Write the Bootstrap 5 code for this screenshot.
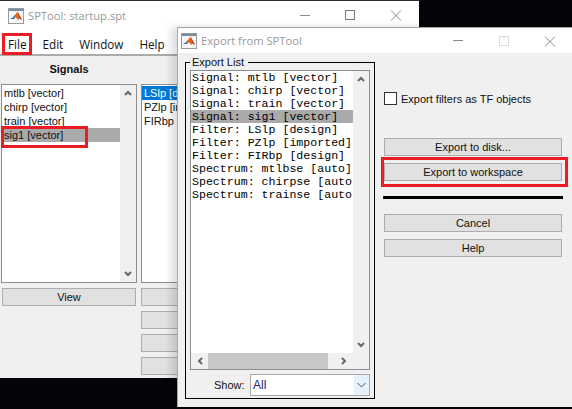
<!DOCTYPE html>
<html lang="en">
<head>
<meta charset="utf-8">
<title>SPTool export</title>
<link href="https://cdn.jsdelivr.net/npm/bootstrap@5.3.0/dist/css/bootstrap.min.css" rel="stylesheet">
<style>
html,body{margin:0;background:#040409;overflow:hidden}
.desk{position:relative;width:572px;height:409px;background:#040409;overflow:hidden;font-family:"Liberation Sans",sans-serif;font-size:11px;line-height:14px;color:#111}
.win{position:absolute;background:#f0f0f0;display:flex;flex-direction:column}
.win-main{left:0;top:0;width:419px;height:378px;border-top:1px solid #2b2b2b}
.win-dlg{left:177px;top:27px;width:395px;height:380px;border-top:1px solid #a0a0a0;border-left:1px solid #a8a8a8;box-shadow:-6px 0 8px rgba(0,0,0,.13)}
.tbar{height:29px;background:#fff;display:flex;align-items:center;flex:none;font-family:"Open Sans",sans-serif;font-size:11.2px;color:#999}
.tbar .ttl{margin-left:4px;white-space:nowrap}
.tbar svg.logo{margin-left:8px;flex:none}
.win-dlg .tbar{height:25px}
.win-dlg .tbar svg.logo{margin-left:3px}
.ctl{margin-left:auto;display:flex;flex:none}
.ctl svg{display:block}
.menus{height:26px;background:#fff;border-bottom:2px solid #ababab;display:flex;align-items:center;padding:3px 0 0 8px;gap:16px;font-family:"Open Sans",sans-serif;font-size:11.7px;color:#111;flex:none}
.main-body{display:flex;gap:4px;padding:6px 0 0 1px;flex:1;min-height:0}
.col-a{width:136px;flex:none;display:flex;flex-direction:column}
.col-b{width:136px;flex:none;display:flex;flex-direction:column}
.hd{font-weight:700;text-align:center;height:22px;line-height:14px;padding-top:0}
.hd-gap{height:22px}
.lbx{height:199px;background:#fff;border:1px solid #8b8f94;display:flex;flex:none;overflow:hidden}
.lbx-items{flex:1;min-width:0;padding-top:1px;list-style:none;margin:0}
.lbx-items .list-group-item{border:0;border-radius:0;padding:0 0 0 2px;background:transparent;font-size:11px;line-height:15px;height:14px;white-space:nowrap;color:#111;margin:0}
.lbx-items .list-group-item.picked{background:#aaa}
.lbx-items .list-group-item.blue{background:#0078d7;color:#fff}
.vbar{width:16px;flex:none;background:#f0f0f0;display:flex;flex-direction:column;justify-content:space-between;align-items:center;padding:5px 0}
.gbtn{display:block;width:100%;height:18px;padding:0;border:1px solid #adadad;border-radius:0;background:#e1e1e1;color:#111;font-size:11px;line-height:15px;font-family:"Liberation Sans",sans-serif}
.gbtn:hover{background:#e1e1e1;border-color:#adadad;color:#111}
.col-a .gbtn{margin:5px 0 0 1px;width:134px}
.col-b .gbtn{margin-top:5px}
.dlg-body{display:flex;flex:1;min-height:0}
.grp{position:relative;margin:9px 0 0 7px;width:190px;height:337px;border:1px solid #000;padding:7px 4px 0 4px;flex:none}
.grp-legend{position:absolute;left:4px;top:-8px;background:#f0f0f0;padding:0 4px 0 2px;font-size:11px;line-height:14px}
.exp{height:300px;background:#fff;border:1px solid #8b8f94;display:flex;flex-direction:column;width:180px}
.exp-top{flex:1;display:flex;min-height:0}
.exp-items{flex:1;min-width:0;overflow:hidden;list-style:none;margin:0;padding:0}
.exp-items .list-group-item{border:0;border-radius:0;padding:0 0 0 1px;margin:0;background:transparent;font-family:"Liberation Mono",monospace;font-size:11.6px;line-height:13px;height:13px;white-space:nowrap;color:#000;overflow:hidden}
.exp-items .list-group-item.picked{background:#aaa}
.hbar{height:16px;flex:none;background:#f0f0f0;display:flex;align-items:center}
.hend{width:17px;flex:none;display:flex;justify-content:center}
.hthumb{flex:1;height:100%;background:#c8c8c8}
.hend-r{width:41px;padding-right:9px}
.show-row{display:flex;align-items:center;margin-top:4px;height:22px}
.show-lbl{margin-left:24px;width:36px}
.combo{width:120px;height:22px;background:#fff;border:1px solid #a9a9a9;display:flex;align-items:center;padding-left:2px;color:#1a237e;font-size:12px}
.combo-txt{flex:1}
.combo-arr{width:15px;height:100%;background:#e5f1fb;display:flex;align-items:center;justify-content:center}
.side{margin-left:9px;width:178px;flex:none;padding-top:39px}
.chk{display:flex;align-items:center;height:13px;margin:0;padding:0}
.chk-box{width:13px;height:13px;border:1px solid #333;background:#fff;border-radius:0;margin:0 4px 0 0;appearance:none;flex:none}
.side .gbtn{height:18px}
.gap-a{margin-top:33px}
.gap-b{margin-top:7px}
.rule{height:3px;background:#000;margin:15px -1px 0 -1px}
.gap-c{margin-top:15px}
.mark-red{position:absolute;border:3px solid #ed1c24;pointer-events:none}
.r1{left:2px;top:33px;width:30px;height:22px}
.r2{left:1px;top:126px;width:87px;height:22px}
.r3{left:381px;top:157px;width:187px;height:30px}
</style>
</head>
<body>
<div class="desk">
  <div class="win win-main">
    <div class="tbar">
      <svg class="logo" width="16" height="16" viewBox="0 0 16 16"><rect x=".5" y=".5" width="15" height="15" fill="#f6f6f6" stroke="#9a9a9a"/><rect x="1" y="1" width="14" height="2" fill="#6f8ca8"/><path d="M2 11l3-1.500 2-2.500 2.500-3.500 1.500 3 3 5.500-2.500-1.500-1.500 1.500-2-2.500-2.500-.5z" fill="#e8651c"/><path d="M2 11l3-1.500 2-2.500-.5 3.500-1.500 .5z" fill="#1f5f9e"/><path d="M9.500 3.500l1.500 3 3 5.500-2.500-1.500z" fill="#b5341a"/></svg>
      <span class="ttl">SPTool: startup.spt</span>
      <div class="ctl"><svg width="119" height="29" viewBox="0 0 119 29"><path d="M0 14.500h10" stroke="#8a8a8a"/><rect x="45.500" y="9.500" width="9" height="9" fill="none" stroke="#777"/><path d="M91 9.500l10 10M101 9.500l-10 10" stroke="#8a8a8a" fill="none"/></svg></div>
    </div>
    <div class="menus"><span>File</span><span>Edit</span><span>Window</span><span>Help</span></div>
    <div class="main-body">
      <div class="col-a">
        <div class="hd">Signals</div>
        <div class="lbx">
          <ul class="list-group lbx-items">
            <li class="list-group-item">mtlb [vector]</li>
            <li class="list-group-item">chirp [vector]</li>
            <li class="list-group-item">train [vector]</li>
            <li class="list-group-item picked">sig1 [vector]</li>
          </ul>
          <div class="vbar">
            <svg width="8" height="6" viewBox="0 0 8 6"><path d="M1 5l3-3 3 3" fill="none" stroke="#666" stroke-width="2"/></svg>
            <svg width="8" height="6" viewBox="0 0 8 6"><path d="M1 1l3 3 3-3" fill="none" stroke="#666" stroke-width="2"/></svg>
          </div>
        </div>
        <button type="button" class="btn gbtn">View</button>
      </div>
      <div class="col-b">
        <div class="hd-gap"></div>
        <div class="lbx">
          <ul class="list-group lbx-items">
            <li class="list-group-item blue">LSlp [design]</li>
            <li class="list-group-item">PZlp [imported]</li>
            <li class="list-group-item">FIRbp [design]</li>
          </ul>
        </div>
        <button type="button" class="btn gbtn">&nbsp;</button>
        <button type="button" class="btn gbtn">&nbsp;</button>
        <button type="button" class="btn gbtn">&nbsp;</button>
        <button type="button" class="btn gbtn">&nbsp;</button>
      </div>
    </div>
  </div>

  <div class="win win-dlg">
    <div class="tbar">
      <svg class="logo" width="16" height="16" viewBox="0 0 16 16"><rect x=".5" y=".5" width="15" height="15" fill="#f6f6f6" stroke="#9a9a9a"/><rect x="1" y="1" width="14" height="2" fill="#6f8ca8"/><path d="M2 11l3-1.500 2-2.500 2.500-3.500 1.500 3 3 5.500-2.500-1.500-1.500 1.500-2-2.500-2.500-.5z" fill="#e8651c"/><path d="M2 11l3-1.500 2-2.500-.5 3.500-1.500 .5z" fill="#1f5f9e"/><path d="M9.500 3.500l1.500 3 3 5.500-2.500-1.500z" fill="#b5341a"/></svg>
      <span class="ttl">Export from SPTool</span>
      <div class="ctl"><svg width="119" height="25" viewBox="0 0 119 25"><path d="M0 12.500h10" stroke="#8a8a8a"/><rect x="46.500" y="8.500" width="9" height="9" fill="none" stroke="#dcdcdc"/><path d="M92 8.500l10 10M102 8.500l-10 10" stroke="#8a8a8a" fill="none"/></svg></div>
    </div>
    <div class="dlg-body">
      <div class="grp">
        <span class="grp-legend">Export List</span>
        <div class="exp">
          <div class="exp-top">
            <ul class="list-group exp-items">
              <li class="list-group-item">Signal: mtlb [vector]</li>
              <li class="list-group-item">Signal: chirp [vector]</li>
              <li class="list-group-item">Signal: train [vector]</li>
              <li class="list-group-item picked">Signal: sig1 [vector]</li>
              <li class="list-group-item">Filter: LSlp [design]</li>
              <li class="list-group-item">Filter: PZlp [imported]</li>
              <li class="list-group-item">Filter: FIRbp [design]</li>
              <li class="list-group-item">Spectrum: mtlbse [auto]</li>
              <li class="list-group-item">Spectrum: chirpse [auto]</li>
              <li class="list-group-item">Spectrum: trainse [auto]</li>
            </ul>
            <div class="vbar">
              <svg width="8" height="6" viewBox="0 0 8 6"><path d="M1 5l3-3 3 3" fill="none" stroke="#666" stroke-width="2"/></svg>
              <svg width="8" height="6" viewBox="0 0 8 6"><path d="M1 1l3 3 3-3" fill="none" stroke="#666" stroke-width="2"/></svg>
            </div>
          </div>
          <div class="hbar">
            <div class="hend"><svg width="6" height="8" viewBox="0 0 6 8"><path d="M5 1L2 4l3 3" fill="none" stroke="#666" stroke-width="2"/></svg></div>
            <div class="hthumb"></div>
            <div class="hend hend-r"><svg width="6" height="8" viewBox="0 0 6 8"><path d="M1 1l3 3-3 3" fill="none" stroke="#666" stroke-width="2"/></svg></div>
          </div>
        </div>
        <div class="show-row">
          <span class="show-lbl">Show:</span>
          <div class="combo"><span class="combo-txt">All</span><span class="combo-arr"><svg width="9" height="6" viewBox="0 0 9 6"><path d="M.5 1l4 4 4-4" fill="none" stroke="#555"/></svg></span></div>
        </div>
      </div>
      <div class="side">
        <label class="chk"><input type="checkbox" class="chk-box"><span>Export filters as TF objects</span></label>
        <button type="button" class="btn gbtn gap-a">Export to disk...</button>
        <button type="button" class="btn gbtn gap-b">Export to workspace</button>
        <div class="rule"></div>
        <button type="button" class="btn gbtn gap-c">Cancel</button>
        <button type="button" class="btn gbtn gap-b">Help</button>
      </div>
    </div>
  </div>

  <div class="mark-red r1"></div>
  <div class="mark-red r2"></div>
  <div class="mark-red r3"></div>
</div>
<script src="https://cdn.jsdelivr.net/npm/bootstrap@5.3.0/dist/js/bootstrap.bundle.min.js"></script>
</body>
</html>
